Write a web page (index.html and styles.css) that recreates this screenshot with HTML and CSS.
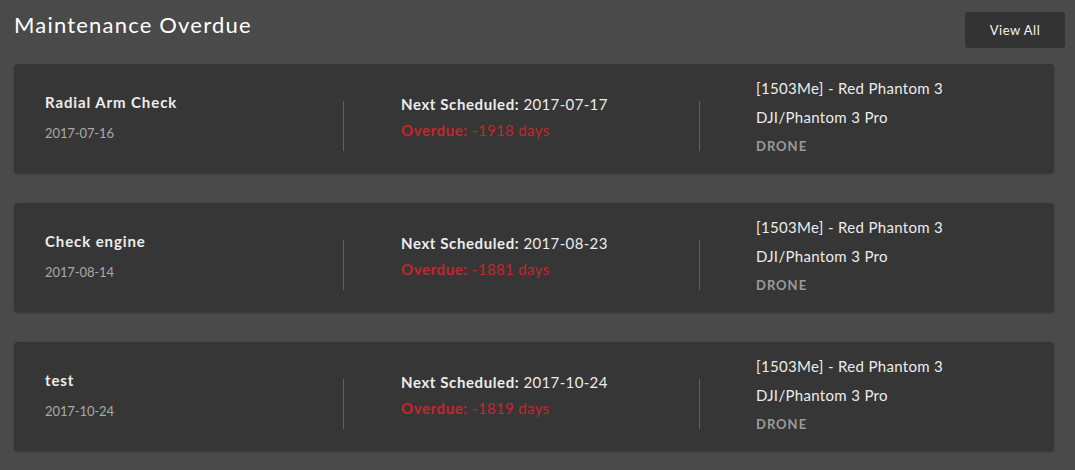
FILE: index.html
```html
<!DOCTYPE html>
<html lang="en">
<head>
<meta charset="utf-8">
<title>Maintenance Overdue</title>
<link rel="stylesheet" href="styles.css">
</head>
<body>
<div class="panel">
  <div class="panel-header">
    <h1 class="panel-title">Maintenance Overdue</h1>
    <button class="btn-view-all">View All</button>
  </div>
  <div class="card-list">
    <div class="card">
      <div class="col col-task">
        <div class="task-name">Radial Arm Check</div>
        <div class="task-date">2017-07-16</div>
      </div>
      <div class="divider"></div>
      <div class="col col-schedule">
        <div class="line"><b>Next Scheduled:</b> 2017-07-17</div>
        <div class="line overdue"><b>Overdue:</b> -1918 days</div>
      </div>
      <div class="divider"></div>
      <div class="col col-asset">
        <div class="line">[1503Me] - Red Phantom 3</div>
        <div class="line">DJI/Phantom 3 Pro</div>
        <div class="line asset-type">DRONE</div>
      </div>
    </div>
    <div class="card">
      <div class="col col-task">
        <div class="task-name">Check engine</div>
        <div class="task-date">2017-08-14</div>
      </div>
      <div class="divider"></div>
      <div class="col col-schedule">
        <div class="line"><b>Next Scheduled:</b> 2017-08-23</div>
        <div class="line overdue"><b>Overdue:</b> -1881 days</div>
      </div>
      <div class="divider"></div>
      <div class="col col-asset">
        <div class="line">[1503Me] - Red Phantom 3</div>
        <div class="line">DJI/Phantom 3 Pro</div>
        <div class="line asset-type">DRONE</div>
      </div>
    </div>
    <div class="card">
      <div class="col col-task">
        <div class="task-name">test</div>
        <div class="task-date">2017-10-24</div>
      </div>
      <div class="divider"></div>
      <div class="col col-schedule">
        <div class="line"><b>Next Scheduled:</b> 2017-10-24</div>
        <div class="line overdue"><b>Overdue:</b> -1819 days</div>
      </div>
      <div class="divider"></div>
      <div class="col col-asset">
        <div class="line">[1503Me] - Red Phantom 3</div>
        <div class="line">DJI/Phantom 3 Pro</div>
        <div class="line asset-type">DRONE</div>
      </div>
    </div>
  </div>
</div>
</body>
</html>
```

FILE: styles.css
```css
html, body {
  margin: 0;
  padding: 0;
  background: #4a4a4a;
  font-family: Lato, "Open Sans", "Liberation Sans", sans-serif;
  color: #ececec;
}

.panel {
  width: 1075px;
  height: 470px;
  overflow: hidden;
}

.panel-header {
  display: flex;
  justify-content: space-between;
  align-items: flex-start;
  padding: 10px 10px 0 14px;
  margin-bottom: 16px;
}

.panel-title {
  margin: 0;
  font-size: 22px;
  line-height: 29px;
  font-weight: 400;
  letter-spacing: 1.2px;
  color: #ffffff;
}

.btn-view-all {
  margin-top: 2px;
  width: 100px;
  height: 36px;
  border: none;
  border-radius: 3px;
  background: #333333;
  color: #f2f2f2;
  font-family: inherit;
  font-size: 13px;
  letter-spacing: 0.5px;
  padding: 0;
}

.card-list {
  display: flex;
  flex-direction: column;
  gap: 30px;
  padding: 0 21px 0 14px;
}

.card {
  display: flex;
  height: 109px;
  box-sizing: border-box;
  padding-left: 31px;
  background: #363636;
  border-radius: 4px;
  box-shadow: 0 1px 2px rgba(0, 0, 0, 0.3);
}

.divider {
  width: 1px;
  height: 50px;
  margin-top: 37px;
  background: #616161;
  flex: none;
}

.col-task {
  width: 298px;
  padding-top: 28px;
}

.task-name {
  font-size: 15px;
  font-weight: 700;
  line-height: 20px;
  letter-spacing: 0.9px;
  color: #ededed;
}

.task-date {
  margin-top: 11px;
  font-size: 13px;
  line-height: 20px;
  letter-spacing: -0.1px;
  color: #a9a9a9;
}

.col-schedule {
  width: 298px;
  padding-left: 57px;
  padding-top: 27px;
  font-size: 15px;
  line-height: 26px;
  letter-spacing: 0.35px;
  color: #ececec;
}

.col-schedule b {
  font-weight: 700;
  letter-spacing: 0.6px;
}

.overdue {
  color: #c4262b;
}

.col-asset {
  padding-left: 56px;
  padding-top: 10px;
  font-size: 15px;
  line-height: 29px;
  letter-spacing: 0.33px;
  color: #ececec;
}

.asset-type {
  font-size: 13px;
  font-weight: 700;
  letter-spacing: 1px;
  color: #9a9a9a;
}
```
